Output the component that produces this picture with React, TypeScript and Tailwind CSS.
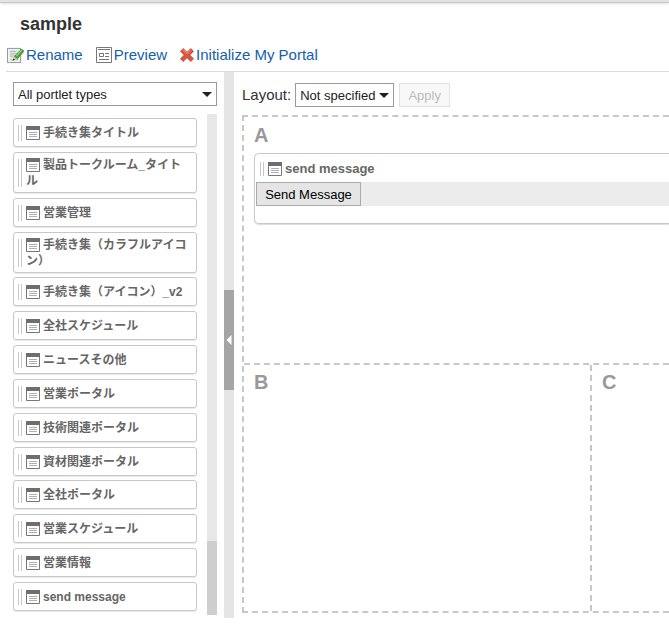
import { useState } from "react";
import type { ReactNode } from "react";

const portlets = [
  "手続き集タイトル",
  "製品トークルーム_タイトル",
  "営業管理",
  "手続き集（カラフルアイコン）",
  "手続き集（アイコン）_v2",
  "全社スケジュール",
  "ニュースその他",
  "営業ポータル",
  "技術関連ポータル",
  "資材関連ポータル",
  "全社ポータル",
  "営業スケジュール",
  "営業情報",
  "send message",
];

function RenameIcon() {
  return (
    <svg width="17" height="17" viewBox="0 0 18 18" aria-hidden="true">
      <path d="M.5 1.500h14v15H.5z" fill="#f1f4f4" stroke="#889395" />
      <path d="M3 4.500h7M3 6.500h7M3 8.500h5M3 10.500h4M3 13.500h9" stroke="#a5adae" />
      <path d="M7.500 11.500l1-2.500L15.500 2 18 4.500 11 12.500z" fill="#48a33c" stroke="#2d7628" strokeWidth=".7" />
      <path d="M9.800 9.500l6-6.300" stroke="#91d46f" strokeWidth="1.300" />
      <path d="M6.500 14l1.300-4 3 2.500z" fill="#e5b878" />
      <path d="M6 14.500l.8-2.400 1.600 1.500z" fill="#222" />
    </svg>
  );
}

function PreviewIcon() {
  return (
    <svg width="16" height="16" viewBox="0 0 16 16" aria-hidden="true">
      <path d="M.5.5h15v15H.5z" fill="#fff" stroke="#777" />
      <path d="M2 2.500h12M9 6.500h4M9 9.500h4M3 12.500h10" stroke="#777" />
      <path d="M3.500 6.500h4v3h-4z" fill="none" stroke="#777" />
    </svg>
  );
}

function CrossIcon() {
  return (
    <svg width="14" height="14" viewBox="0 0 14 14" aria-hidden="true">
      <path d="M3.200.5L7 4.200 10.800.5 13.500 3.200 9.800 7l3.700 3.800-2.700 2.700L7 9.800l-3.800 3.700L.5 10.800 4.200 7 .5 3.200z" fill="#dc5541" stroke="#bd3b2b" strokeWidth=".7" />
      <path d="M3.200 1.800L7 5.500l3.800-3.700" fill="none" stroke="#f3a08d" />
    </svg>
  );
}

function PortletIcon() {
  return (
    <svg className="-mt-1 mr-[3px] inline-block align-[-3px]" width="14" height="14" viewBox="0 0 14 14" aria-hidden="true">
      <path d="M.5.5h13v13H.5z" fill="#fff" stroke="#777" />
      <path d="M0 0h14v4H0z" fill="#6e6e6e" />
      <path d="M3 6.500h8M3 8.500h8M3 10.500h8" stroke="#b0b0b0" />
    </svg>
  );
}

function Grip() {
  return <span className="my-0.5 w-1 shrink-0 self-stretch border-x border-[#c8c8c8]" />;
}

function Dropdown({ id, label, options, className }: { id: string; label: string; options: string[]; className: string }) {
  return (
    <div className={`relative h-6 ${className}`}>
      <select
        id={id}
        aria-label={label}
        className="block h-6 w-full appearance-none border border-[#999] bg-white px-1 pt-px text-[13px] leading-4 text-[#222]"
      >
        {options.map((option) => (
          <option key={option}>{option}</option>
        ))}
      </select>
      <svg className="pointer-events-none absolute top-2.5 right-[5px]" width="10" height="5" viewBox="0 0 10 5" aria-hidden="true">
        <path d="M0 0h10L5 5z" fill="#222" />
      </svg>
    </div>
  );
}

function Action({ icon, children }: { icon: ReactNode; children: ReactNode }) {
  return (
    <a href="#" className="flex items-center gap-0.5 text-[#1460aa]">
      {icon}
      {children}
    </a>
  );
}

export default function App() {
  const [open, setOpen] = useState(true);

  return (
    <div className="overflow-hidden bg-white font-['Liberation_Sans','Noto_Sans_CJK_JP',sans-serif] text-[#333]">
      <div className="h-[3px] border-b border-[#c8c8c8] bg-[#e3e3e3] shadow-sm" />
      <header className="ml-1.5 border-b border-[#ddd] pb-1.5">
        <h1 className="mt-[9px] ml-3.5 text-lg leading-6 font-bold">sample</h1>
        <nav className="mt-[9px] flex h-5 items-center gap-[13px] pl-px text-[15px]">
          <Action icon={<RenameIcon />}>Rename</Action>
          <Action icon={<PreviewIcon />}>Preview</Action>
          <Action icon={<CrossIcon />}>Initialize My Portal</Action>
        </nav>
      </header>

      <div className="flex">
        {open && (
          <aside className="w-[224px] shrink-0 pt-2.5 pr-[7px] pb-[3px] pl-[13px]">
            <Dropdown id="portlet-type" label="Portlet type" options={["All portlet types"]} className="w-full" />
            <div className="mt-2 flex h-[501px] justify-between">
              <ul className="my-1 flex w-[184px] flex-col justify-between">
                {portlets.map((name) => (
                  <li
                    key={name}
                    className="flex min-h-[29px] items-center gap-1 rounded-[3px] border border-[#c8c8c8] px-1 pt-1 pb-[3px] text-xs leading-4 font-bold text-[#666] shadow-[0_1px_1px_#e8e8e8]"
                  >
                    <Grip />
                    <span className="min-w-0 flex-1 leading-4 break-all">
                      <PortletIcon />
                      {name}
                    </span>
                  </li>
                ))}
              </ul>
              <div className="flex w-2.5 flex-col justify-end bg-[#e7e7e7]">
                <div className="h-[74px] bg-[#cecece]" />
              </div>
            </div>
          </aside>
        )}

        <div className="flex w-2.5 shrink-0 flex-col bg-[#e5e5e5] pt-[218px]">
          <button
            type="button"
            aria-label="Toggle portlet list"
            onClick={() => setOpen(!open)}
            className="flex h-[100px] items-center justify-center bg-[#a5a5a5]"
          >
            <svg width="6" height="10" viewBox="0 0 6 10" aria-hidden="true">
              <path d="M5.500 0v10L.5 5z" fill="#fff" />
            </svg>
          </button>
        </div>

        <main className="min-w-0 flex-1 pt-[11px] pl-2">
          <div className="flex h-6 items-center">
            <label htmlFor="layout" className="mr-1 text-[15px] leading-6">Layout:</label>
            <Dropdown id="layout" label="Layout" options={["Not specified"]} className="w-[99px]" />
            <button type="button" disabled className="ml-[5px] h-6 w-[51px] border border-[#e0e0e0] bg-[#f8f8f8] pt-px text-[13px] text-[#bbb]">
              Apply
            </button>
          </div>

          <div className="mt-2 border-2 border-r-0 border-dashed border-[#c8c8c8] text-[#999]">
            <section className="h-[246px] pt-1.5 pl-2.5">
              <h2 className="text-xl leading-6 font-bold">A</h2>
              <div className="mt-1.5 rounded-l-[5px] border border-r-0 border-[#c8c8c8] pb-[17px] pl-px shadow-[0_1px_1px_#ddd]">
                <div className="flex h-7 items-center gap-1 pt-1.5 pb-1 pl-1 text-[13px] leading-4 font-bold text-[#666]">
                  <Grip />
                  <span>
                    <PortletIcon />
                    send message
                  </span>
                </div>
                <div className="flex bg-[#ececec]">
                  <button type="button" className="h-6 w-[105px] border border-[#aaa] bg-[#e5e5e5] pt-px text-[13px] text-black">
                    Send Message
                  </button>
                </div>
              </div>
            </section>
            <div className="grid h-[248px] grid-cols-[348px_1fr] border-t-2 border-dashed border-[#c8c8c8]">
              <section className="border-r-2 border-dashed border-[#c8c8c8] pt-[5px] pl-2.5">
                <h2 className="text-xl leading-6 font-bold">B</h2>
              </section>
              <section className="pt-[5px] pl-2.5">
                <h2 className="text-xl leading-6 font-bold">C</h2>
              </section>
            </div>
          </div>
        </main>
      </div>
    </div>
  );
}
